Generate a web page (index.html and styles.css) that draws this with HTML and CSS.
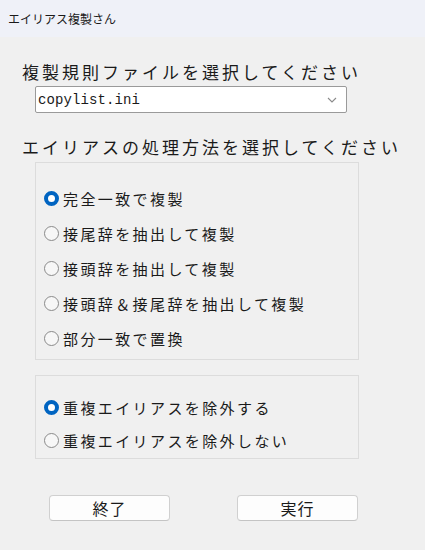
FILE: index.html
```html
<!DOCTYPE html>
<html lang="ja">
<head>
    <meta charset="UTF-8">
    <meta name="viewport" content="width=device-width, initial-scale=1.0">
    <title>エイリアス複製さん</title>
    <link rel="stylesheet" href="styles.css">
</head>
<body>
    <div class="titlebar">エイリアス複製さん</div>

    <div class="content">
        <p class="label first">複製規則ファイルを選択してください</p>
        <div class="combo">
            <span class="combo-text">copylist.ini</span>
            <svg class="chevron" width="10" height="6" viewBox="0 0 10 6">
                <path d="M1 1 L5 5 L9 1" fill="none" stroke="#8a8a8a" stroke-width="1.1"/>
            </svg>
        </div>

        <p class="label">エイリアスの処理方法を選択してください</p>
        <div class="group method">
            <label class="option"><input type="radio" name="method" checked><span>完全一致で複製</span></label>
            <label class="option"><input type="radio" name="method"><span>接尾辞を抽出して複製</span></label>
            <label class="option"><input type="radio" name="method"><span>接頭辞を抽出して複製</span></label>
            <label class="option"><input type="radio" name="method"><span>接頭辞＆接尾辞を抽出して複製</span></label>
            <label class="option"><input type="radio" name="method"><span>部分一致で置換</span></label>
        </div>

        <div class="group dup">
            <label class="option"><input type="radio" name="dup" checked><span>重複エイリアスを除外する</span></label>
            <label class="option"><input type="radio" name="dup"><span>重複エイリアスを除外しない</span></label>
        </div>

        <div class="buttons">
            <button class="btn">終了</button>
            <button class="btn">実行</button>
        </div>
    </div>
</body>
</html>
```

FILE: styles.css
```css
* {
    box-sizing: border-box;
    margin: 0;
    padding: 0;
}

body {
    width: 425px;
    height: 550px;
    background: #f0f0f0;
    color: #1a1a1a;
    font-family: "Noto Sans CJK JP", "Noto Sans", sans-serif;
    overflow: hidden;
}

.titlebar {
    height: 37px;
    background: #eff1f8;
    display: flex;
    align-items: center;
    padding-left: 8px;
    font-size: 12px;
}

.content {
    padding-left: 22px;
}

.label {
    font-size: 17px;
    line-height: 20px;
    letter-spacing: 3px;
    margin-top: 24px;
}

.label.first {
    margin-top: 25px;
}

.combo {
    margin: 4px 0 0 13px;
    width: 312px;
    height: 27px;
    background: #ffffff;
    border: 1px solid #9a9a9a;
    border-radius: 2px;
    display: flex;
    align-items: center;
    justify-content: space-between;
    padding: 0 9px 0 2px;
}

.combo-text {
    font-family: "Liberation Mono", monospace;
    font-size: 14px;
    letter-spacing: 0.1px;
}

.group {
    margin-left: 13px;
    width: 324px;
    border: 1px solid #dcdcdc;
    display: flex;
    flex-direction: column;
    padding-left: 8px;
}

.method {
    margin-top: 5px;
    padding-top: 18px;
    padding-bottom: 3px;
}

.method .option {
    height: 35px;
}

.dup {
    margin-top: 15px;
    padding-top: 15px;
    padding-bottom: 1px;
}

.dup .option {
    height: 33px;
}

.option {
    display: flex;
    align-items: center;
    gap: 4px;
    font-size: 15px;
    letter-spacing: 2.4px;
}

.option input {
    appearance: none;
    width: 15px;
    height: 15px;
    border-radius: 50%;
    border: 1px solid #8a8a8a;
    background: #f7f7f7;
    flex-shrink: 0;
}

.option input:checked {
    border: 4.5px solid #0064c1;
    background: #ffffff;
}

.buttons {
    margin: 36px 0 0 27px;
    display: flex;
    gap: 67px;
}

.btn {
    width: 121px;
    height: 26px;
    background: #fdfdfd;
    border: 1px solid #d0d0d0;
    border-bottom-color: #c4c4c4;
    border-radius: 4px;
    font-family: "Noto Sans CJK JP", sans-serif;
    font-size: 16px;
    letter-spacing: 1px;
    color: #1a1a1a;
}
```
